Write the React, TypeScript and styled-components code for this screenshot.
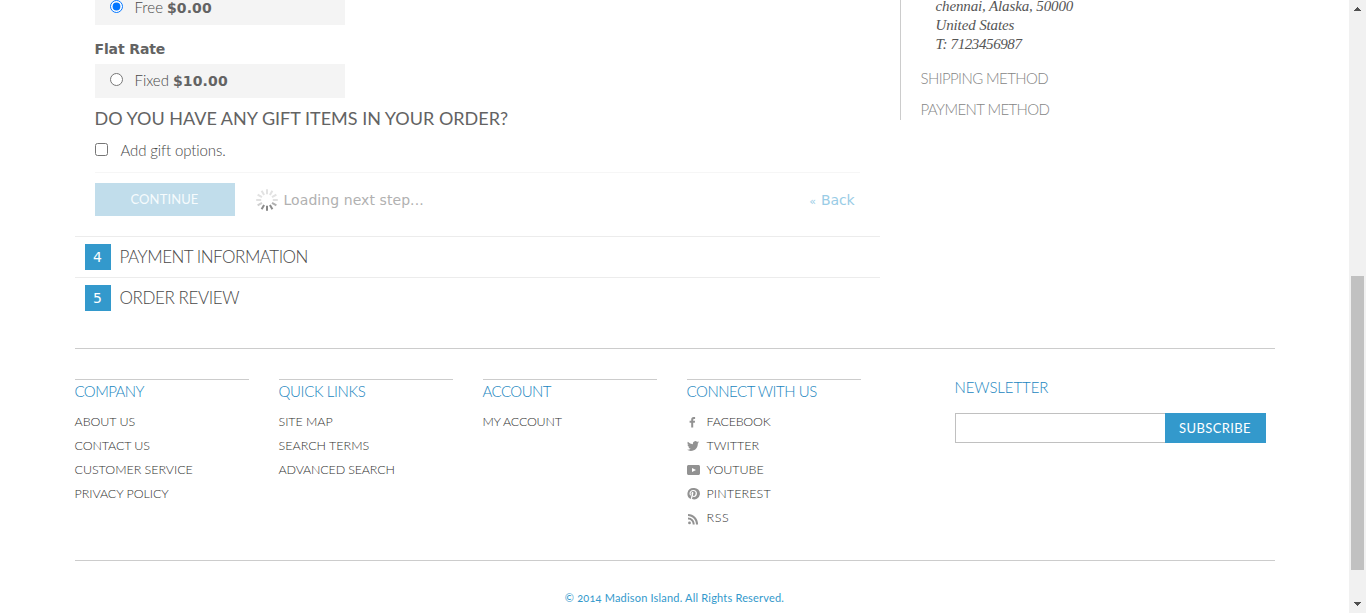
import React from 'react';
import styled, { createGlobalStyle, css } from 'styled-components';

const sans = 'Lato, "Open Sans", sans-serif';
const verdana = 'Verdana, "DejaVu Sans", sans-serif';
const georgia = '"Liberation Serif", serif';

const GlobalStyle = createGlobalStyle`
  * { box-sizing: border-box; }
  html, body { margin: 0; overflow: hidden; background: #fff; }
  body { font: 14px/20px ${verdana}; color: #636363; }
  ul { list-style: none; margin: 0; padding: 0; }
  a { color: inherit; text-decoration: none; }
`;

/* Letter spacing varies with the label it is applied to. */
const Track = styled.span<{ $t: number }>`
  letter-spacing: ${(p) => p.$t}px;
  white-space: nowrap;
`;

const Window = styled.div`
  display: flex;
  width: 1366px;
  height: 613px;
  overflow: hidden;
`;
const Page = styled.div`
  width: 1349px;
  padding: 0 74.5px;
`;
const Main = styled.main`
  display: flex;
  height: 348px;
`;
const Checkout = styled.section`
  width: 805px;
  margin-right: 20px;
`;
const StepBody = styled.div`
  display: flex;
  flex-direction: column;
  height: 236px;
  padding: 0 20px;
`;
const Method = styled.label<{ $cut?: boolean }>`
  display: flex;
  flex: none;
  align-items: center;
  width: 250px;
  height: 34px;
  margin-top: ${(p) => (p.$cut ? '-9px' : '0')};
  padding: 0 15px 1px;
  background: #f4f4f4;
  font: 300 15px/20px ${sans};
  color: #484848;
`;
const MethodName = styled.span`
  padding-bottom: 2px;
`;
const Radio = styled.input`
  width: 13px;
  height: 13px;
  margin: -2px 12px 0 0;
`;
const Price = styled.strong`
  margin-left: 4px;
  font: bold 14px/20px ${verdana};
  color: #636363;
`;
const Carrier = styled.div`
  height: 39px;
  padding-top: 14px;
  font-weight: bold;
`;
const GiftTitle = styled.h3`
  margin: 8px 0 0;
  font: 400 18px/24px ${sans};
  color: #636363;
`;
const GiftOption = styled.label`
  display: flex;
  align-items: center;
  height: 20px;
  margin-top: 10px;
  font: 300 15px/20px ${sans};
  color: #484848;
`;
const Check = styled.input`
  width: 13px;
  height: 13px;
  margin: -1px 13px 0 0;
`;
const Actions = styled.div`
  display: flex;
  align-items: center;
  height: 44px;
  margin-top: 12px;
  padding-top: 10px;
  border-top: 1px solid #f6f6f6;
`;
const Button = styled.button<{ $pending?: boolean }>`
  width: ${(p) => (p.$pending ? 140 : 101)}px;
  height: ${(p) => (p.$pending ? 33 : 30)}px;
  padding: 0;
  border: 0;
  background: ${(p) => (p.$pending ? '#c1ddeb' : '#3399cc')};
  color: ${(p) => (p.$pending ? '#f6fbfd' : '#fff')};
  font: 400 13px/20px ${sans};
  ${(p) => p.$pending && css`padding: 0 0 1px 0;`}
`;
const Loading = styled.span`
  display: flex;
  align-items: center;
  gap: 6px;
  margin-left: 21px;
  color: #b1b1b1;
`;
const Back = styled.a`
  margin: 2px 5px 0 auto;
  color: #99cce6 !important;
`;
const Guillemet = styled.small`
  margin-right: 5px;
  font-size: 11px;
`;
const Step = styled.div`
  display: flex;
  align-items: center;
  height: 41px;
  padding: 0 10px;
  border-top: 1px solid #ececec;
  font: 300 17px/24px ${sans};
  color: #484848;
`;
const StepNumber = styled.span`
  width: 26px;
  height: 26px;
  margin-right: 9px;
  background: #3399cc;
  color: #fff;
  font: 14px/26px ${verdana};
  text-align: center;
`;
const StepName = styled.span`
  padding-bottom: 1px;
`;
const Progress = styled.aside`
  width: 300px;
  height: 120px;
  padding-left: 20px;
  border-left: 1px solid #ccc;
  font: 300 15px/20px ${sans};
  color: #858585;
`;
const Address = styled.address`
  margin: -3px 0 14px 15px;
  font: italic 15px/19px ${georgia};
  color: #555;
`;
const ProgressItem = styled.div`
  height: 31px;
`;
const Footer = styled.footer`
  display: flex;
  height: 213px;
  padding-top: 30px;
  border-top: 1px solid #ccc;
  border-bottom: 1px solid #ccc;
`;
const Column = styled.div`
  width: 174px;
  margin-right: 30px;
  border-top: 1px solid #ccc;
`;
const BlockTitle = styled.h4`
  margin: 1px 0 9px;
  font: 300 15px/20px ${sans};
  color: #1a86c0;
`;
const LinkItem = styled.li`
  display: flex;
  align-items: center;
  height: 24px;
  font: 300 12.5px/24px ${sans};
  color: #303030;
`;
const IconSlot = styled.span`
  display: flex;
  width: 20px;
  height: 14px;
  color: #929292;
`;
const Newsletter = styled.form`
  margin: -4px 0 0 64px;
`;
const Subscribe = styled.div`
  display: flex;
  margin-top: 16px;
`;
const Email = styled.input`
  width: 210px;
  height: 30px;
  border: 1px solid #c0c0c0;
  border-right: 0;
  border-radius: 0;
  outline: 0;
`;
const NewsletterTitle = styled(BlockTitle)`
  margin: 2px 0 15px;
`;
const Copyright = styled.div`
  padding-top: 27px;
  font: 400 11px/20px ${sans};
  font-variant-numeric: oldstyle-nums;
  color: #3399cc;
  text-align: center;
`;
const ScrollBar = styled.div`
  display: flex;
  flex-direction: column;
  align-items: center;
  width: 17px;
  height: 613px;
  background: #f1f1f1;
`;
const Thumb = styled.div`
  width: 13px;
  height: 294px;
  margin: 259px 0 17px;
  background: #c1c1c1;
`;

const Arrow = ({ down }: { down?: boolean }) => (
  <svg width="17" height={down ? 26 : 17} viewBox={down ? '0 -9 17 26' : '0 0 17 17'} shapeRendering="crispEdges" fill="#505050">
    {down ? <path d="M5 6h7v1h-1v1h-1v1h-1v1h-1v-1h-1v-1h-1v-1h-1z" /> : <path d="M8 7h1v1h1v1h1v1h1v1h-7v-1h1v-1h1v-1h1z" />}
  </svg>
);

const spokes = ['#e2e2e2', '#e2e2e2', '#e2e2e2', '#e0e0e0', '#b0b0b0', '#8c8c8c', '#858585', '#8c8c8c', '#cfcfcf', '#e0e0e0', '#e2e2e2', '#e2e2e2'];
const Spinner = () => (
  <svg width="22" height="22" viewBox="-11 -11 22 22">
    {spokes.map((c, i) => (
      <line key={i} x1="0" y1="-5.8" x2="0" y2="-10.8" stroke={c} strokeWidth="2" transform={`rotate(${i * 30})`} />
    ))}
  </svg>
);

const icons: Record<string, React.ReactNode> = {
  facebook: <path d="M4.2 12.5V7.7H2.6V5.8h1.6V4.6c0-1.7.9-2.6 2.4-2.6h1.5v1.9H7c-.6 0-.8.3-.8.8v1.1h1.9l-.3 1.9H6.2v4.8z" />,
  twitter: <path transform="translate(-.5 .7) scale(.53)" d="M23.64 4.94c-.84.37-1.73.62-2.66.73a4.6 4.6 0 0 0 2.04-2.56c-.9.53-1.9.92-2.95 1.13A4.64 4.64 0 0 0 12.16 8.5A13.2 13.2 0 0 1 2.6 3.64a4.64 4.64 0 0 0 1.44 6.2c-.76-.02-1.48-.23-2.1-.58v.06a4.64 4.64 0 0 0 3.72 4.55c-.68.19-1.4.22-2.1.08a4.64 4.64 0 0 0 4.34 3.22A9.32 9.32 0 0 1 1 19.1a13.14 13.14 0 0 0 7.12 2.08c8.54 0 13.21-7.07 13.21-13.21l-.01-.6a9.4 9.4 0 0 0 2.32-2.43z" />,
  youtube: <path fillRule="evenodd" d="M2 2h9c1.5 0 2 .6 2 2v6c0 1.4-.5 2-2 2H2c-1.5 0-2-.6-2-2V4c0-1.4.5-2 2-2zm3 3v4l4-2z" />,
  pinterest: (
    <path transform="scale(.5)" d="M12.5 2A11.5 11.5 0 0 0 8 24.1c-.1-1-.2-2.4.1-3.4l1.4-5.9s-.4-.7-.4-1.8c0-1.7 1-2.9 2.2-2.9 1 0 1.500.8 1.500 1.7 0 1-.7 2.6-1 4-.3 1.2.6 2.2 1.8 2.2 2.1 0 3.6-2.7 3.6-5.9 0-2.4-1.6-4.2-4.6-4.2-3.3 0-5.4 2.5-5.4 5.3 0 1 .3 1.7.7 2.2.2.2.2.3.2.6l-.3.9c0 .3-.3.4-.5.3-1.5-.6-2.3-2.3-2.3-4.2 0-3.1 2.6-6.9 7.9-6.9 4.2 0 7 3 7 6.3 0 4.3-2.4 7.5-5.9 7.5-1.2 0-2.3-.6-2.7-1.4l-.7 2.8c-.3.9-.8 1.8-1.2 2.4A11.5 11.5 0 1 0 12.5 2z" />
  ),
  rss: (
    <g transform="translate(0 1)">
      <circle cx="2.5" cy="10.9" r="1.4" />
      <path d="M1 5.5v2.1c2.7 0 4.7 2.1 4.7 4.8h2C7.7 8.5 4.8 5.5 1 5.5z" />
      <path d="M1 2v2c4.5 0 8 3.7 8 8.4h2.1C11.1 6.5 6.7 2 1 2z" />
    </g>
  ),
};

type Entry = { label: string; t: number; icon?: string };
const columns: { title: string; t: number; links: Entry[] }[] = [
  { title: 'COMPANY', t: -0.6, links: [
    { label: 'ABOUT US', t: -0.06 }, { label: 'CONTACT US', t: -0.12 },
    { label: 'CUSTOMER SERVICE', t: -0.04 }, { label: 'PRIVACY POLICY', t: -0.06 } ] },
  { title: 'QUICK LINKS', t: -0.35, links: [
    { label: 'SITE MAP', t: -0.05 }, { label: 'SEARCH TERMS', t: 0 }, { label: 'ADVANCED SEARCH', t: -0.17 } ] },
  { title: 'ACCOUNT', t: -0.55, links: [{ label: 'MY ACCOUNT', t: -0.24 }] },
  { title: 'CONNECT WITH US', t: -0.47, links: [
    { label: 'FACEBOOK', t: -0.22, icon: 'facebook' }, { label: 'TWITTER', t: 0.03, icon: 'twitter' },
    { label: 'YOUTUBE', t: -0.05, icon: 'youtube' }, { label: 'PINTEREST', t: 0.12, icon: 'pinterest' },
    { label: 'RSS', t: 0.6, icon: 'rss' } ] },
];

export default function App() {
  return (
    <Window>
      <GlobalStyle />
      <Page>
        <Main>
          <Checkout>
            <StepBody>
              <Method $cut>
                <Radio type="radio" name="shipping" defaultChecked />
                <MethodName><Track $t={0.05}>Free</Track></MethodName>
                <Price><Track $t={0.1}>$0.00</Track></Price>
              </Method>
              <Carrier><Track $t={-0.12}>Flat Rate</Track></Carrier>
              <Method>
                <Radio type="radio" name="shipping" />
                <MethodName><Track $t={-0.03}>Fixed</Track></MethodName>
                <Price><Track $t={0.16}>$10.00</Track></Price>
              </Method>
              <GiftTitle><Track $t={0}>DO YOU HAVE ANY GIFT ITEMS IN YOUR ORDER?</Track></GiftTitle>
              <GiftOption><Check type="checkbox" /><Track $t={-0.12}>Add gift options.</Track></GiftOption>
              <Actions>
                <Button type="button" $pending><Track $t={0.1}>CONTINUE</Track></Button>
                <Loading><Spinner /><Track $t={0.07}>Loading next step...</Track></Loading>
                <Back href="#"><Guillemet>«</Guillemet><Track $t={-0.1}>Back</Track></Back>
              </Actions>
            </StepBody>
            <Step><StepNumber>4</StepNumber><StepName><Track $t={-0.49}>PAYMENT INFORMATION</Track></StepName></Step>
            <Step><StepNumber>5</StepNumber><StepName><Track $t={-0.4}>ORDER REVIEW</Track></StepName></Step>
          </Checkout>
          <Progress>
            <Address>
              <Track $t={-0.13}>chennai, Alaska, 50000</Track><br />
              <Track $t={-0.13}>United States</Track><br />
              <Track $t={-0.4}>T: 7123456987</Track>
            </Address>
            <ProgressItem><Track $t={-0.6}>SHIPPING METHOD</Track></ProgressItem>
            <ProgressItem><Track $t={-0.6}>PAYMENT METHOD</Track></ProgressItem>
          </Progress>
        </Main>
        <Footer>
          {columns.map((c) => (
            <Column key={c.title}>
              <BlockTitle><Track $t={c.t}>{c.title}</Track></BlockTitle>
              <ul>
                {c.links.map((l) => (
                  <LinkItem key={l.label}>
                    {l.icon && <IconSlot><svg width="14" height="14" viewBox="0 0 14 14" fill="currentColor">{icons[l.icon]}</svg></IconSlot>}
                    <a href="#"><Track $t={l.t}>{l.label}</Track></a>
                  </LinkItem>
                ))}
              </ul>
            </Column>
          ))}
          <Newsletter>
            <NewsletterTitle><Track $t={-0.1}>NEWSLETTER</Track></NewsletterTitle>
            <Subscribe>
              <Email type="email" />
              <Button type="button"><Track $t={0.4}>SUBSCRIBE</Track></Button>
            </Subscribe>
          </Newsletter>
        </Footer>
        <Copyright><Track $t={0.19}>© 2014 Madison Island. All Rights Reserved.</Track></Copyright>
      </Page>
      <ScrollBar>
        <Arrow />
        <Thumb />
        <Arrow down />
      </ScrollBar>
    </Window>
  );
}
